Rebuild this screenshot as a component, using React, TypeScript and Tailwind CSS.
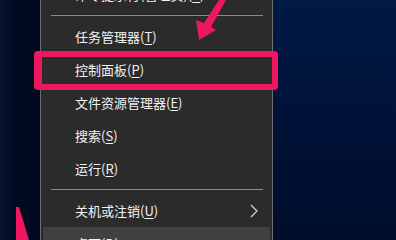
import React from "react";

const items = [
  { label: "任务管理器", key: "T" },
  { label: "控制面板", key: "P" },
  { label: "文件资源管理器", key: "E" },
  { label: "搜索", key: "S" },
  { label: "运行", key: "R" },
];

const MenuRow: React.FC<{ label: string; hotkey: string; arrow?: boolean; active?: boolean }> = ({
  label,
  hotkey,
  arrow,
  active,
}) => (
  <div
    className={`h-[33px] mx-[2px] flex items-center pl-[32px] pr-[10px] ${
      active ? "bg-[#414141]" : ""
    }`}
  >
    <span className="flex-1 whitespace-nowrap text-[13px] leading-none text-[#f2f2f2]">
      {label}(<u className="underline-offset-2">{hotkey}</u>)
    </span>
    {arrow && (
      <svg width="8" height="14" viewBox="0 0 8 14" className="mr-[2px]">
        <path d="M1 1 L7 7 L1 13" fill="none" stroke="#d8d8d8" strokeWidth="1.2" />
      </svg>
    )}
  </div>
);

const Separator = () => (
  <div className="py-[4px] pl-[10px] pr-[9px]">
    <div className="h-px bg-[#8a8a8a]" />
  </div>
);

const App: React.FC = () => {
  return (
    <div
      className="relative w-[396px] h-[240px] overflow-hidden flex bg-[#000c24]"
      style={{ fontFamily: '"Noto Sans CJK SC", "Microsoft YaHei", sans-serif' }}
    >
      {/* desktop strip left */}
      <div className="w-[40px] h-full bg-gradient-to-r from-[#07132e] via-[#000a20] to-[#000b22]" />

      {/* context menu */}
      <div className="w-[233px] h-full bg-[#2b2b2b] border-l border-r border-[#6e6e6e] overflow-hidden">
        <div className="-mt-[22px]">
          <MenuRow label="命令提示符(管理员)" hotkey="A" />
          <Separator />
          {items.map((it) => (
            <MenuRow key={it.key} label={it.label} hotkey={it.key} />
          ))}
          <Separator />
          <MenuRow label="关机或注销" hotkey="U" arrow />
          <MenuRow label="桌面" hotkey="D" active />
        </div>
      </div>

      {/* desktop right */}
      <div className="flex-1 h-full bg-gradient-to-b from-[#001a45] via-[#001238] to-[#000d2c]" />

      {/* highlight box */}
      <div className="absolute left-[34px] top-[51px] w-[244px] h-[39px] border-[6px] border-l-[8px] border-[#ef1760] rounded-[4px]" />

      {/* arrows */}
      <svg className="absolute left-0 top-0" width="396" height="240" viewBox="0 0 396 240">
        <polygon
          points="219,0 226,0 211,27 216,30 199,40 196,20 204,23"
          fill="#ef1760"
        />
        <polygon points="16,207 19,207 29,240 16,240" fill="#ef1760" />
      </svg>
    </div>
  );
};

export default App;
